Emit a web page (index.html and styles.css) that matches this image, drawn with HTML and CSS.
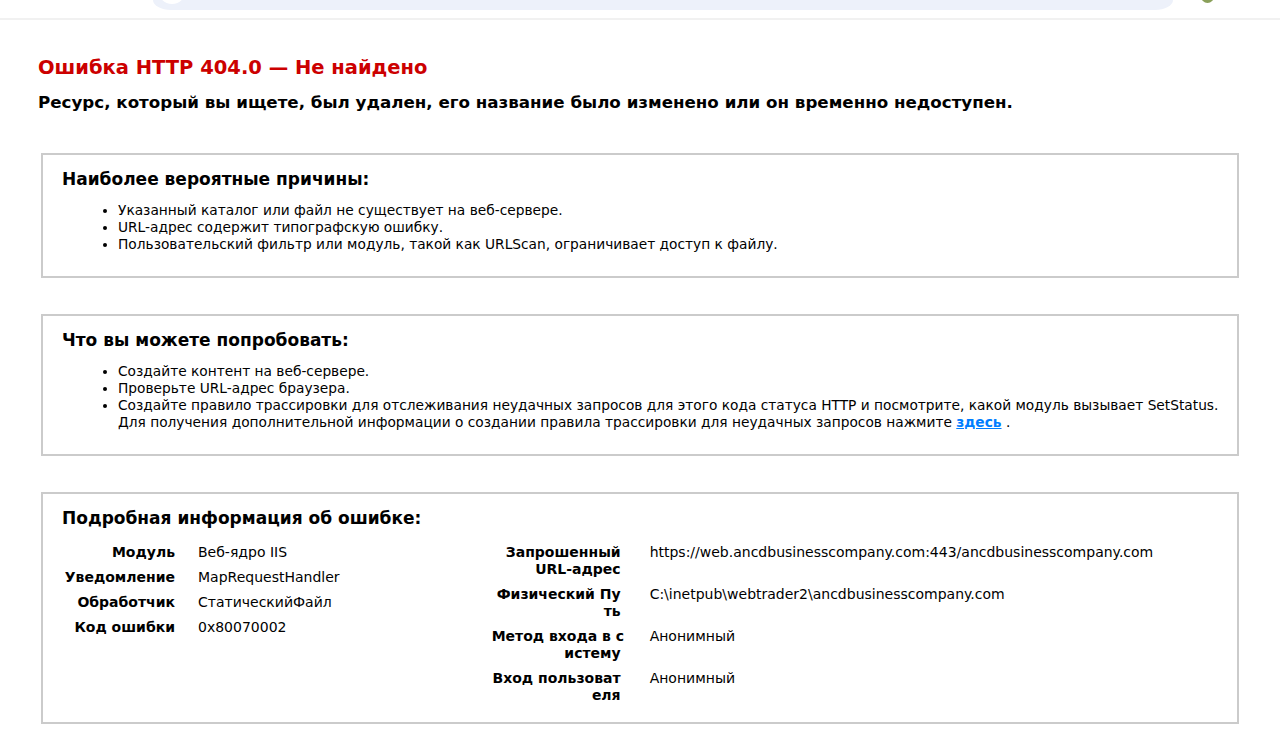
FILE: index.html
```html
<!DOCTYPE html>
<html lang="ru">
<head>
<meta charset="utf-8">
<title>IIS 404.0 - Не найдено</title>
<link rel="stylesheet" href="styles.css">
</head>
<body>
<div class="chrome">
  <div class="omnibox"><span class="omni-icon"></span></div>
  <span class="avatar"></span>
</div>
<div class="content">
  <h2 class="title">Ошибка HTTP 404.0 — Не найдено</h2>
  <h3 class="subtitle">Ресурс, который вы ищете, был удален, его название было изменено или он временно недоступен.</h3>

  <div class="box">
    <h4 class="box-title">Наиболее вероятные причины:</h4>
    <ul class="list">
      <li>Указанный каталог или файл не существует на веб-сервере.</li>
      <li>URL-адрес содержит типографскую ошибку.</li>
      <li>Пользовательский фильтр или модуль, такой как URLScan, ограничивает доступ к файлу.</li>
    </ul>
  </div>

  <div class="box">
    <h4 class="box-title">Что вы можете попробовать:</h4>
    <ul class="list">
      <li>Создайте контент на веб-сервере.</li>
      <li>Проверьте URL-адрес браузера.</li>
      <li><span class="nowrap">Создайте правило трассировки для отслеживания неудачных запросов для этого кода статуса HTTP и посмотрите, какой модуль вызывает SetStatus.</span><br>Для получения дополнительной информации о создании правила трассировки для неудачных запросов нажмите <a href="#">здесь</a> .</li>
    </ul>
  </div>

  <div class="box box-details">
    <h4 class="box-title">Подробная информация об ошибке:</h4>
    <div class="details">
      <table class="tbl tbl-left">
        <tr><th>Модуль</th><td>Веб-ядро IIS</td></tr>
        <tr><th>Уведомление</th><td>MapRequestHandler</td></tr>
        <tr><th>Обработчик</th><td>СтатическийФайл</td></tr>
        <tr><th>Код ошибки</th><td>0x80070002</td></tr>
      </table>
      <table class="tbl tbl-right">
        <tr><th>Запрошенный<br>URL-адрес</th><td>https://web.ancdbusinesscompany.com:443/ancdbusinesscompany.com</td></tr>
        <tr><th>Физический Пу<br>ть</th><td>C:\inetpub\webtrader2\ancdbusinesscompany.com</td></tr>
        <tr><th>Метод входа в с<br>истему</th><td>Анонимный</td></tr>
        <tr><th>Вход пользоват<br>еля</th><td>Анонимный</td></tr>
      </table>
    </div>
  </div>
</div>
</body>
</html>
```
FILE: styles.css
```css
html, body {
  margin: 0;
  padding: 0;
  background: #ffffff;
}
body {
  font-family: "DejaVu Sans", Verdana, sans-serif;
  font-size: 14px;
  line-height: 17px;
  color: #000000;
  width: 1280px;
  overflow: hidden;
}
.chrome {
  position: relative;
  height: 18px;
  border-bottom: 2px solid #f1f1f1;
}
.omnibox {
  position: relative;
  margin-left: 153px;
  width: 1020px;
  height: 10px;
  background: #edf1fa;
  border-radius: 0 0 18px 18px / 0 0 10px 10px;
  overflow: hidden;
}
.omni-icon {
  position: absolute;
  left: 5px;
  top: -24px;
  width: 28px;
  height: 28px;
  border-radius: 50%;
  background: #ffffff;
}
.avatar {
  position: absolute;
  left: 1201px;
  top: -10px;
  width: 13px;
  height: 13px;
  border-radius: 50%;
  background: #8aa05a;
}
.content {
  padding: 0 0 0 38px;
}
.title {
  margin: 35px 0 0 0;
  font-size: 19.5px;
  line-height: 25px;
  font-weight: bold;
  color: #cc0000;
}
.subtitle {
  margin: 12px 0 0 0;
  font-size: 16.7px;
  line-height: 21px;
  font-weight: bold;
  color: #000000;
}
.box {
  margin: 40px 0 0 3px;
  width: 1155px;
  border: 2px solid #cbcbcb;
  padding: 14px 20px 23px 19px;
}
.box + .box {
  margin-top: 36px;
}
.box-details {
  padding-bottom: 13px;
}
.box-title {
  margin: 0;
  font-size: 17px;
  line-height: 20px;
  font-weight: bold;
}
.list {
  margin: 13px 0 0 0;
  padding-left: 56px;
  list-style: disc;
  font-size: 13.75px;
  line-height: 17px;
}
.nowrap {
  white-space: nowrap;
}
a {
  color: #007eff;
  font-weight: bold;
}
.details {
  display: flex;
  align-items: flex-start;
  margin-top: 11px;
}
.tbl {
  border-collapse: separate;
  border-spacing: 2px;
  table-layout: fixed;
}
.tbl th, .tbl td {
  vertical-align: top;
  padding: 3px 0;
  text-align: left;
  font-weight: normal;
}
.tbl th {
  text-align: right;
  font-weight: bold;
  white-space: nowrap;
}
.tbl-left {
  width: 428px;
}
.tbl-left th {
  width: 111px;
  padding-right: 21px;
}
.tbl-right {
  width: 728px;
}
.tbl-right th {
  width: 129px;
  padding-right: 27px;
}
```
